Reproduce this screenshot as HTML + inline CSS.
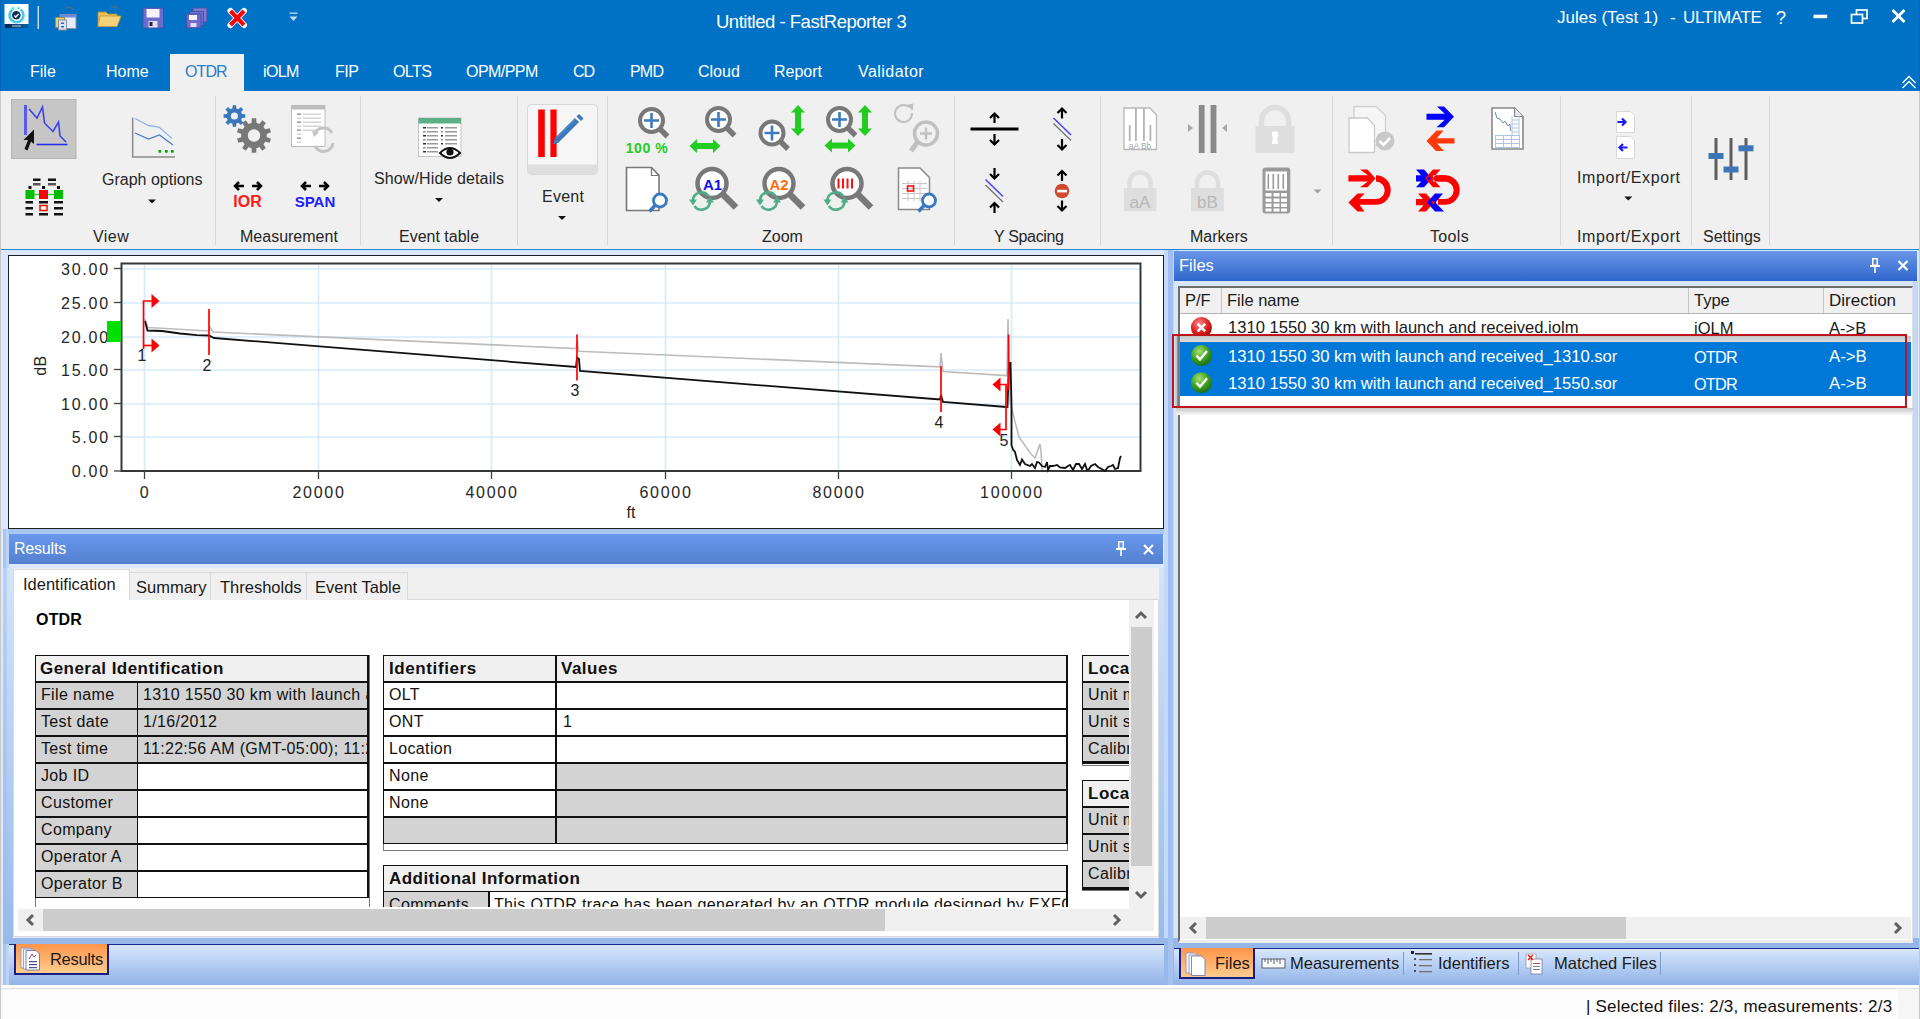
<!DOCTYPE html>
<html><head><meta charset="utf-8">
<style>
*{box-sizing:border-box;margin:0;padding:0}
html,body{width:1920px;height:1019px;overflow:hidden}
body{position:relative;background:#DCE8FB;font-family:"Liberation Sans",sans-serif;font-size:16px;color:#000}
.a{position:absolute}
.t{position:absolute;white-space:pre;line-height:1}
#title{left:0;top:0;width:1920px;height:92px;background:#0072C6}
#ribbon{left:0;top:91px;width:1920px;height:158px;background:#F0F0F0}
.sep{position:absolute;top:96px;width:1px;height:149px;background:#D5D5D5}
.glabel{position:absolute;top:228.5px;font-size:16px;color:#262626;white-space:pre;line-height:1}
.tab{position:absolute;top:64px;color:#fff;font-size:16px;white-space:pre;line-height:1}
.hdr{position:absolute;background:linear-gradient(#6898EE,#5480CE);color:#fff}
.hdr2{position:absolute;background:linear-gradient(#6A96E8,#2F66CC);color:#fff}
table{border-collapse:collapse}
</style></head><body>
<!-- window side borders -->


<!-- TITLE BAR -->
<div id="title" class="a"></div>
<div class="t" style="left:716px;top:12.5px;font-size:18.5px;color:#fff;letter-spacing:-0.49px">Untitled - FastReporter 3</div>
<div class="t" style="left:1557px;top:9px;font-size:17px;color:#fff">Jules (Test 1)</div><div class="t" style="left:1670px;top:9px;font-size:17px;color:#fff">-</div><div class="t" style="left:1683px;top:9px;font-size:17px;color:#fff;letter-spacing:-0.4px">ULTIMATE</div>

<!-- Ribbon tabs -->
<div class="a" style="left:170px;top:54px;width:74px;height:38px;background:#F0F0F0"></div>
<div class="tab" style="left:30px">File</div>
<div class="tab" style="left:106px">Home</div>
<div class="tab" style="left:185px;color:#2B7BD0;letter-spacing:-0.9px">OTDR</div>
<div class="tab" style="left:263px;letter-spacing:-0.6px">iOLM</div>
<div class="tab" style="left:335px;letter-spacing:-0.5px">FIP</div>
<div class="tab" style="left:393px;letter-spacing:-0.6px">OLTS</div>
<div class="tab" style="left:466px;letter-spacing:-0.55px">OPM/PPM</div>
<div class="tab" style="left:573px;letter-spacing:-1px">CD</div>
<div class="tab" style="left:630px;letter-spacing:-0.8px">PMD</div>
<div class="tab" style="left:698px">Cloud</div>
<div class="tab" style="left:774px">Report</div>
<div class="tab" style="left:858px;letter-spacing:0.45px">Validator</div>

<!-- RIBBON -->
<div id="ribbon" class="a"></div>
<div class="a" style="left:0;top:249px;width:1920px;height:1px;background:#2585D0"></div>
<div class="sep" style="left:215px"></div>
<div class="sep" style="left:360px"></div>
<div class="sep" style="left:517px"></div>
<div class="sep" style="left:607px"></div>
<div class="sep" style="left:954px"></div>
<div class="sep" style="left:1100px"></div>
<div class="sep" style="left:1332px"></div>
<div class="sep" style="left:1560px"></div>
<div class="sep" style="left:1691px"></div>
<div class="sep" style="left:1769px"></div>
<div class="glabel" style="left:93px;letter-spacing:0.45px">View</div>
<div class="glabel" style="left:240px">Measurement</div>
<div class="glabel" style="left:399px">Event table</div>
<div class="glabel" style="left:762px">Zoom</div>
<div class="glabel" style="left:994px;letter-spacing:-0.33px">Y Spacing</div>
<div class="glabel" style="left:1190px">Markers</div>
<div class="glabel" style="left:1430px;letter-spacing:0.35px">Tools</div>
<div class="glabel" style="left:1577px;letter-spacing:0.58px">Import/Export</div>
<div class="glabel" style="left:1703px">Settings</div>
<div class="t" style="left:102px;top:172px;color:#262626">Graph options</div>
<div class="t" style="left:374px;top:171px;color:#262626;letter-spacing:0.12px">Show/Hide details</div>
<div class="t" style="left:542px;top:189px;color:#262626;letter-spacing:0.25px">Event</div>
<div class="t" style="left:1577px;top:170px;color:#262626;letter-spacing:0.58px">Import/Export</div>

<svg class="a" style="left:0;top:0" width="1920" height="250" viewBox="0 0 1920 250">
<!-- QAT -->
<g>
<defs><linearGradient id="appstrip" x1="0" x2="1"><stop offset="0" stop-color="#021E3A"/><stop offset="0.5" stop-color="#1A4A7A"/><stop offset="1" stop-color="#0A5A9A"/></linearGradient></defs>
<rect x="4.5" y="4" width="24" height="20" fill="#fff"/>
<rect x="5" y="24" width="23" height="4" fill="url(#appstrip)"/>
<rect x="12" y="25.3" width="9" height="1.4" fill="#8AAACC"/>
<path d="M12.5 9.5 A7 7 0 1 0 20.5 9.5" fill="none" stroke="#48C8F4" stroke-width="2.6"/>
<circle cx="13" cy="8.5" r="1.4" fill="#40F0F8"/><circle cx="18.5" cy="8.3" r="1.2" fill="#40E0F8"/>
<circle cx="16.3" cy="15.2" r="4.3" fill="#14305A"/>
<path d="M14.3 15.5 l1.5 1.5 l2.8 -3" stroke="#fff" stroke-width="1.3" fill="none"/>
<rect x="37.5" y="6" width="1.5" height="23" fill="#C8D8E8"/>
<!-- windows icon -->
<rect x="60" y="14.5" width="16" height="14" fill="#E8ECFA" stroke="#8890A0"/>
<rect x="60" y="14.5" width="16" height="3" fill="#6A8AE0"/>
<rect x="55.5" y="17.5" width="9" height="10" fill="#E8D070" stroke="#A09050"/>
<rect x="58.5" y="20" width="8" height="10" fill="#DDE4F4" stroke="#8890A0"/>
<rect x="61" y="22.5" width="3" height="1.5" fill="#3A5AD0"/><rect x="61" y="26" width="3" height="1.5" fill="#3A5AD0"/>
<path d="M65 9 q4 -4 9 1" stroke="#5A6A8A" stroke-width="1.2" fill="none"/>
<!-- folder -->
<path d="M98 12 h8 l2 2 h9 v12 h-19z" fill="#E8C058" stroke="#B08A30" stroke-width="0.8"/>
<path d="M100 16 h21 l-4 10.5 h-19z" fill="#F4D27A" stroke="#C09A40" stroke-width="0.8"/>
<path d="M111 8 q4 -3 8 1" stroke="#5A6A8A" stroke-width="1.2" fill="none"/>
<!-- save -->
<rect x="143" y="8" width="20.5" height="20" fill="#6B6BD0" stroke="#4A4A9A" stroke-width="0.8"/>
<rect x="146.5" y="9" width="13" height="8.5" fill="#F4F4FA"/>
<rect x="148.5" y="21" width="9" height="6.5" fill="#E0E0F0"/>
<rect x="149.5" y="22" width="3" height="4" fill="#202040"/>
<!-- save all -->
<rect x="193" y="8" width="14" height="14" fill="#7A7AD8" stroke="#4A4A9A" stroke-width="0.8"/>
<rect x="189.5" y="11.5" width="14" height="14" fill="#7070D4" stroke="#4A4A9A" stroke-width="0.8"/>
<rect x="186.5" y="14" width="14.5" height="14" fill="#6B6BD0" stroke="#4A4A9A" stroke-width="0.8"/>
<rect x="189" y="15" width="8" height="5" fill="#F4F4FA"/>
<rect x="190.5" y="23" width="6" height="4" fill="#E0E0F0"/>
<!-- red X -->
<path d="M230.5 11 L244 25 M244 11 L230.5 25" stroke="#fff" stroke-width="6" stroke-linecap="round"/>
<path d="M230.5 11 L244 25 M244 11 L230.5 25" stroke="#FF0000" stroke-width="4"/>
<!-- qat dropdown -->
<rect x="289.5" y="12.5" width="8" height="1.3" fill="#C8D8F0"/>
<path d="M289.5 16.5 h8 l-4 4.5z" fill="#C8D8F0"/>
</g>
<!-- title buttons -->
<g fill="none" stroke="#fff">
<rect x="1813.5" y="14.7" width="13.7" height="3.5" fill="#fff" stroke="none"/>
<rect x="1856.5" y="10" width="10.5" height="8.5" stroke-width="1.7"/>
<rect x="1851.5" y="14.5" width="11" height="8.5" fill="#0072C6" stroke-width="1.7"/>
<path d="M1892.5 10 L1904.5 22 M1904.5 10 L1892.5 22" stroke-width="2.8"/>
<path d="M1902.5 83 l6.5 -6.5 l6.5 6.5 M1902.5 88 l6.5 -6.5 l6.5 6.5" stroke-width="1.4"/>
</g>
<text x="1776" y="24" font-family="Liberation Sans" font-size="18" fill="#fff">?</text>

<!-- VIEW group -->
<rect x="11.5" y="99.5" width="64.5" height="59" fill="#C6C6C6" stroke="#B4B4B4"/>
<rect x="24" y="105" width="3" height="30" fill="#5A5AF0"/>
<polyline points="29,109 37,118 42.5,107 44.5,123 53,131.5 58.5,122 60,136 66,142" fill="none" stroke="#4040F0" stroke-width="1.6"/>
<line x1="36.5" y1="144.5" x2="67.5" y2="144.5" stroke="#2828F0" stroke-width="1.6"/>
<path d="M34 129.5 L34 144 L31 141.5 L27.5 150.5 L24.5 149 L28 140 L23.5 140 Z" fill="#111"/>
<g fill="#111">
<rect x="33" y="178.5" width="7.5" height="2.5"/><rect x="48" y="178.5" width="8" height="2.5"/>
<rect x="33" y="183" width="7.5" height="2.5" fill="#555"/><rect x="48" y="183" width="8" height="2.5" fill="#555"/>
<rect x="28.5" y="186" width="3" height="3"/><rect x="42" y="186" width="3" height="3"/><rect x="57" y="186" width="3" height="3"/>
<rect x="25.5" y="201" width="7.5" height="2.5"/><rect x="39" y="201" width="9" height="2.5"/><rect x="54" y="201" width="9" height="2.5"/>
<rect x="25.5" y="207" width="7.5" height="2.5"/><rect x="54" y="207" width="9" height="2.5"/>
<rect x="25.5" y="213" width="7.5" height="2.5"/><rect x="39" y="213" width="9" height="2.5"/><rect x="54" y="213" width="9" height="2.5"/>
</g>
<line x1="30" y1="194.5" x2="58" y2="194.5" stroke="#22CC22" stroke-width="1.2"/>
<rect x="25.5" y="190" width="9" height="9" fill="#00BB00"/>
<rect x="39" y="190" width="9" height="9" fill="#FF0000"/>
<rect x="54" y="190" width="9" height="9" fill="#00BB00"/>
<rect x="40" y="205.5" width="7" height="5" fill="#fff" stroke="#FF0000" stroke-width="1.5"/>
<!-- graph options -->
<polyline points="132.7,117.5 132.7,157 175,157" fill="none" stroke="#8A8A8A" stroke-width="1.5"/>
<polyline points="135,118.5 148.5,125.5 159,127 172,138.5" fill="none" stroke="#90B4EA" stroke-width="1.3"/>
<polyline points="135,133 148.5,139 159.5,135 173,145" fill="none" stroke="#4A78C0" stroke-width="1.3"/>
<rect x="158.5" y="150" width="2.7" height="2.7" fill="#00AA00"/><rect x="165" y="150" width="2.7" height="2.7" fill="#00AA00"/><rect x="171" y="150" width="2.7" height="2.7" fill="#00AA00"/>
<path d="M148 199.5 h8 l-4 4z" fill="#111"/>

<!-- MEASUREMENT group -->
<path d="M231.42 108.79 L232.52 108.43 L232.68 105.14 L236.12 105.14 L236.28 108.43 L237.38 108.79 L238.42 109.32 L240.87 107.10 L243.30 109.53 L241.08 111.98 L241.61 113.02 L241.97 114.12 L245.26 114.28 L245.26 117.72 L241.97 117.88 L241.61 118.98 L241.08 120.02 L243.30 122.47 L240.87 124.90 L238.42 122.68 L237.38 123.21 L236.28 123.57 L236.12 126.86 L232.68 126.86 L232.52 123.57 L231.42 123.21 L230.38 122.68 L227.93 124.90 L225.50 122.47 L227.72 120.02 L227.19 118.98 L226.83 117.88 L223.54 117.72 L223.54 114.28 L226.83 114.12 L227.19 113.02 L227.72 111.98 L225.50 109.53 L227.93 107.10 L230.38 109.32Z M238.00 116.00 A3.6 3.6 0 1 0 230.80 116.00 A3.6 3.6 0 1 0 238.00 116.00Z" fill="#3A78BE" fill-rule="evenodd"/>
<path d="M250.04 123.33 L251.52 122.94 L251.83 118.34 L256.17 118.34 L256.48 122.94 L257.96 123.33 L259.38 123.88 L262.33 120.34 L265.84 122.89 L263.39 126.80 L264.36 127.98 L265.18 129.26 L269.65 128.13 L270.99 132.26 L266.71 133.98 L266.80 135.50 L266.71 137.02 L270.99 138.74 L269.65 142.87 L265.18 141.74 L264.36 143.02 L263.39 144.20 L265.84 148.11 L262.33 150.66 L259.38 147.12 L257.96 147.67 L256.48 148.06 L256.17 152.66 L251.83 152.66 L251.52 148.06 L250.04 147.67 L248.62 147.12 L245.67 150.66 L242.16 148.11 L244.61 144.20 L243.64 143.02 L242.82 141.74 L238.35 142.87 L237.01 138.74 L241.29 137.02 L241.20 135.50 L241.29 133.98 L237.01 132.26 L238.35 128.13 L242.82 129.26 L243.64 127.98 L244.61 126.80 L242.16 122.89 L245.67 120.34 L248.62 123.88Z M260.20 135.50 A6.2 6.2 0 1 0 247.80 135.50 A6.2 6.2 0 1 0 260.20 135.50Z" fill="#787878" fill-rule="evenodd"/>
<rect x="291.5" y="105.5" width="33.5" height="41" fill="#fff" stroke="#BDBDBD"/>
<rect x="291.5" y="105.5" width="33.5" height="4" fill="#BDBDBD"/>
<g fill="#D4D4D4"><rect x="297" y="113.5" width="4" height="1.5" fill="#999"/><rect x="303" y="113.5" width="18" height="1.5"/>
<rect x="297" y="117.5" width="4" height="1.5"/><rect x="303" y="117.5" width="18" height="1.5"/>
<rect x="297" y="121.5" width="4" height="1.5" fill="#999"/><rect x="303" y="121.5" width="18" height="1.5"/>
<rect x="297" y="125.5" width="4" height="1.5"/><rect x="303" y="125.5" width="18" height="1.5"/>
<rect x="297" y="129.5" width="4" height="1.5" fill="#999"/><rect x="303" y="129.5" width="14" height="1.5"/>
<rect x="297" y="133.5" width="4" height="1.5"/><rect x="297" y="137.5" width="4" height="1.5" fill="#999"/><rect x="297" y="141.5" width="4" height="1.5"/></g>
<path d="M314.5 135 a9.5 9.5 0 0 1 17.5 -2 M333 143 a9.5 9.5 0 0 1 -18 3" fill="none" stroke="#C4C4C4" stroke-width="3"/>
<path d="M312 131 l7 1 l-5 5z" fill="#C4C4C4"/>
<g stroke="#000" stroke-width="2.5" fill="none">
<path d="M235 186 h9 M239 182 l-4 4 l4 4 M252 186 h9 M257 182 l4 4 l-4 4"/>
<path d="M302 186 h9 M306 182 l-4 4 l4 4 M319 186 h9 M324 182 l4 4 l-4 4"/>
</g>
<text x="247.5" y="207" font-family="Liberation Sans" font-weight="700" font-size="16" fill="#FF1A1A" text-anchor="middle">IOR</text>
<text x="315" y="207" font-family="Liberation Sans" font-weight="700" font-size="15" fill="#2020FF" text-anchor="middle">SPAN</text>

<!-- EVENT TABLE group -->
<rect x="418.5" y="118" width="42.5" height="38.5" fill="#fff" stroke="#C4C4C4"/>
<rect x="418.5" y="118" width="42.5" height="5.5" fill="#5DAF85"/>
<g fill="#9A9A9A">
<rect x="423" y="127" width="3" height="1.5" fill="#333"/><rect x="427" y="127" width="11" height="1.5"/><rect x="441" y="127" width="2" height="1.5" fill="#333"/><rect x="445" y="127" width="12" height="1.5"/>
<rect x="423" y="131" width="3" height="1.5"/><rect x="427" y="131" width="11" height="1.5"/><rect x="441" y="131" width="2" height="1.5"/><rect x="445" y="131" width="12" height="1.5"/>
<rect x="423" y="135" width="3" height="1.5" fill="#333"/><rect x="427" y="135" width="11" height="1.5"/><rect x="441" y="135" width="2" height="1.5" fill="#333"/><rect x="445" y="135" width="12" height="1.5"/>
<rect x="423" y="139" width="3" height="1.5"/><rect x="427" y="139" width="11" height="1.5"/><rect x="441" y="139" width="2" height="1.5"/><rect x="445" y="139" width="12" height="1.5"/>
<rect x="423" y="143" width="3" height="1.5" fill="#333"/><rect x="427" y="143" width="11" height="1.5"/><rect x="441" y="143" width="2" height="1.5" fill="#333"/><rect x="445" y="143" width="12" height="1.5"/>
<rect x="423" y="147" width="3" height="1.5"/><rect x="427" y="147" width="11" height="1.5"/>
<rect x="423" y="151" width="3" height="1.5" fill="#333"/><rect x="427" y="151" width="11" height="1.5"/>
</g>
<path d="M440 153 q10 -10 20 0 q-10 10 -20 0z" fill="#fff" stroke="#111" stroke-width="2"/>
<circle cx="450" cy="152" r="3.6" fill="#111"/>
<path d="M435 198 h8 l-4 4z" fill="#111"/>
<!-- EVENT group -->
<rect x="527.5" y="104.5" width="70" height="70" rx="4" fill="#F6F6F6" stroke="#D6D6D6"/>
<path d="M528 164.5 h69 v6 a4 4 0 0 1 -4 4 h-61 a4 4 0 0 1 -4 -4z" fill="#DEDEDE"/>
<rect x="538.2" y="109.5" width="6.6" height="47.5" fill="#FF0000"/>
<rect x="550.4" y="109.5" width="6.2" height="47.5" fill="#FF0000"/>
<path d="M556.5 140.5 L577 120" stroke="#3C78BE" stroke-width="6"/>
<path d="M553 144.5 l1.8 -6 l4.2 4.2z" fill="#3C78BE"/>
<path d="M576.5 116.5 l2.5 -2.5 l4.5 4.5 l-2.5 2.5z" fill="#3C78BE"/>
<path d="M557.5 137 L575.5 119" stroke="#6A9AD0" stroke-width="1"/>
<path d="M558 216 h8 l-4 4z" fill="#111"/>

<!-- ZOOM group -->
<defs>
<g id="mag"><circle cx="0" cy="0" r="11.5" fill="#fff" stroke="#787878" stroke-width="4"/><path d="M8.5 8.5 L16 16" stroke="#787878" stroke-width="5.5"/></g>
<g id="plus"><path d="M-7.5 0 h15 M0 -7.5 v15" stroke="#3D7AC0" stroke-width="2.6"/></g>
<g id="bigmag"><circle cx="0" cy="0" r="14.5" fill="#fff" stroke="#787878" stroke-width="4.5"/><path d="M11 11 L24 24" stroke="#787878" stroke-width="6.5"/></g>
<g id="refresh"><g fill="none" stroke="#4EAE88" stroke-width="2.6"><path d="M-8.5 0 A8.5 8.5 0 0 1 7 -5"/><path d="M8.5 0 A8.5 8.5 0 0 1 -7 5"/></g><path d="M-12.5 -1.5 L-4.5 -1.5 L-8.5 4.5z M12.5 1.5 L4.5 1.5 L8.5 -4.5z" fill="#4EAE88"/></g>
<g id="hdarrow" fill="#22CC22"><path d="M-15.5 0 l7.5 -7 v4 h16 v-4 l7.5 7 l-7.5 7 v-4 h-16 v4z"/></g>
<g id="vdarrow" fill="#22CC22"><path d="M0 -15.5 l-7 7.5 h4 v16 h-4 l7 7.5 l7 -7.5 h-4 v-16 h4z"/></g>
</defs>
<use href="#mag" x="651.5" y="120.5"/><use href="#plus" x="651.5" y="120.5"/>
<text x="647" y="152.5" font-family="Liberation Sans" font-weight="700" font-size="14" fill="#22CC22" text-anchor="middle" letter-spacing="0.6">100 %</text>
<use href="#mag" x="718.5" y="119.5"/><use href="#plus" x="718.5" y="119.5"/>
<use href="#hdarrow" x="705" y="146"/>
<use href="#mag" x="772" y="133"/><use href="#plus" x="772" y="133"/>
<use href="#vdarrow" x="798" y="120.5"/>
<use href="#mag" x="839.5" y="119.5"/><use href="#plus" x="839.5" y="119.5"/>
<use href="#vdarrow" x="865" y="120.5"/>
<use href="#hdarrow" x="840" y="145.5"/>
<g opacity="0.55">
<circle cx="926" cy="133.5" r="11.5" fill="none" stroke="#9A9A9A" stroke-width="3.5"/>
<path d="M917.5 142 L911 151" stroke="#9A9A9A" stroke-width="5"/>
<path d="M920 133.5 h12 M926 127.5 v12" stroke="#9A9A9A" stroke-width="2.4"/>
<path d="M909 107 a8.5 8.5 0 1 0 3 6" fill="none" stroke="#9A9A9A" stroke-width="2"/>
<path d="M906.5 105 l7 -1.5 l-1 7z" fill="#9A9A9A"/>
</g>
<!-- row 2 -->
<path d="M626.5 167.5 h25 l7.5 8 v35 h-32.5z" fill="#fff" stroke="#787878" stroke-width="1.6"/>
<path d="M651.5 167.5 v8 h7.5" fill="none" stroke="#787878" stroke-width="1.2"/>
<circle cx="660" cy="200.5" r="6.5" fill="#fff" stroke="#3C78C0" stroke-width="2.8"/>
<path d="M655 205.5 L649.5 211.5" stroke="#3C78C0" stroke-width="3.5"/>
<use href="#bigmag" x="712" y="183.5"/>
<text x="712.5" y="190" font-family="Liberation Sans" font-weight="700" font-size="15" fill="#1010EE" text-anchor="middle">A1</text>
<use href="#refresh" x="701.5" y="201"/>
<use href="#bigmag" x="779" y="183.5"/>
<text x="779" y="190" font-family="Liberation Sans" font-weight="700" font-size="15" fill="#FF6A10" text-anchor="middle">A2</text>
<use href="#refresh" x="768.5" y="201"/>
<use href="#bigmag" x="847" y="183.5"/>
<g fill="#FF1010"><rect x="837.5" y="178.5" width="2" height="10"/><rect x="842" y="178.5" width="2" height="10"/><rect x="846.5" y="178.5" width="2" height="10"/><rect x="851" y="178.5" width="2" height="10"/></g>
<use href="#refresh" x="836" y="201"/>
<path d="M898.5 168 h21.5 l9.5 9.5 v32 h-31z" fill="#fff" stroke="#8A8A8A" stroke-width="1.5"/>
<g stroke="#C8C8C8" stroke-width="1" fill="none"><path d="M902 183.5 h25 M902 188.5 h25 M902 193.5 h25 M902 198.5 h20 M908 181 v20 M914 181 v20 M920 181 v20"/></g>
<rect x="907.5" y="186" width="6" height="5" fill="none" stroke="#FF1010" stroke-width="1.6"/>
<circle cx="929" cy="200.5" r="6.5" fill="#fff" stroke="#3C78C0" stroke-width="2.8"/>
<path d="M924 205.5 L918.5 211.5" stroke="#3C78C0" stroke-width="3.5"/>

<!-- Y SPACING -->
<g stroke="#000" fill="none" stroke-width="2.2">
<path d="M970.5 129 h48" stroke-width="3"/>
<path d="M994.5 113 v10 M990 118 l4.5 -4.5 l4.5 4.5"/>
<path d="M994.5 134 v10 M990 140 l4.5 4.5 l4.5 -4.5"/>
<path d="M1062 108.5 v10 M1057.5 113 l4.5 -4.5 l4.5 4.5"/>
<path d="M1062 139 v10 M1057.5 145 l4.5 4.5 l4.5 -4.5"/>
<path d="M994.5 168 v10 M990 174 l4.5 4.5 l4.5 -4.5"/>
<path d="M994.5 203 v10 M990 207.5 l4.5 -4.5 l4.5 4.5"/>
<path d="M1062 171 v10 M1057.5 175.5 l4.5 -4.5 l4.5 4.5"/>
<path d="M1062 200.5 v10 M1057.5 206 l4.5 4.5 l4.5 -4.5"/>
</g>
<path d="M1053.5 118 L1071 135" stroke="#4848F0" stroke-width="1.6"/>
<path d="M1053.5 123.5 L1071 140.5" stroke="#707070" stroke-width="1.2"/>
<path d="M985.5 179.5 L1003 196.5" stroke="#4848F0" stroke-width="1.6"/>
<path d="M985.5 185 L1003 202" stroke="#707070" stroke-width="1.2"/>
<circle cx="1062" cy="191" r="7.3" fill="#D04A2E"/>
<rect x="1057" y="189.8" width="10" height="2.6" fill="#fff"/>

<!-- MARKERS -->
<path d="M1124 108 h26 l6.5 7 v34.5 h-32.5z" fill="#fff" stroke="#B8B8B8" stroke-width="1.3"/>
<g fill="#B4B4B4"><rect x="1128.8" y="125" width="1.8" height="16"/><rect x="1135" y="108" width="1.8" height="33"/><rect x="1143" y="108" width="1.8" height="33"/><rect x="1149.5" y="125" width="1.8" height="16"/></g>
<text x="1140" y="148.5" font-family="Liberation Sans" font-size="8.5" fill="#A8A8A8" text-anchor="middle">aA Bb</text>
<rect x="1198.8" y="105" width="5.8" height="48" fill="#8A8A8A"/><rect x="1210.6" y="105" width="5.8" height="48" fill="#8A8A8A"/>
<path d="M1188 124 l5 4 l-5 4z M1227 124 l-5 4 l5 4z" fill="#A8A8A8"/>
<path d="M1261.5 127 v-6 a13.5 13.5 0 0 1 27 0 v6" fill="none" stroke="#DEDEDE" stroke-width="5.5"/>
<rect x="1255.5" y="126" width="39" height="27" fill="#DEDEDE"/>
<circle cx="1275" cy="134.5" r="3.2" fill="#fff"/><path d="M1273 136 h4 l1 8 h-6z" fill="#fff"/>
<path d="M1129.5 188.5 v-5.5 a10.5 10.5 0 0 1 21 0 v5.5" fill="none" stroke="#DEDEDE" stroke-width="4.5"/>
<rect x="1123.8" y="188" width="32.5" height="23" fill="#DEDEDE"/>
<text x="1140" y="207.5" font-family="Liberation Sans" font-size="17" fill="#B8B8B8" text-anchor="middle">aA</text>
<path d="M1197 188.5 v-5.5 a10.5 10.5 0 0 1 21 0 v5.5" fill="none" stroke="#DEDEDE" stroke-width="4.5"/>
<rect x="1191" y="188" width="32.8" height="23" fill="#DEDEDE"/>
<text x="1207.5" y="207.5" font-family="Liberation Sans" font-size="17" fill="#B8B8B8" text-anchor="middle">bB</text>
<rect x="1262.5" y="167.5" width="27.8" height="46" rx="3" fill="#9A9A9A"/>
<rect x="1265.5" y="171.5" width="21.5" height="19" fill="#fff"/>
<g fill="#9A9A9A"><rect x="1267.5" y="174" width="1.6" height="15"/><rect x="1272.5" y="174" width="1.6" height="15"/><rect x="1277.5" y="174" width="1.6" height="15"/><rect x="1282.5" y="174" width="1.6" height="15"/></g>
<g fill="#fff"><rect x="1265.5" y="193" width="6" height="3.5"/><rect x="1273.5" y="193" width="6" height="3.5"/><rect x="1281" y="193" width="6" height="3.5"/>
<rect x="1265.5" y="198.5" width="6" height="3.5"/><rect x="1273.5" y="198.5" width="6" height="3.5"/><rect x="1281" y="198.5" width="6" height="3.5"/>
<rect x="1265.5" y="203.5" width="6" height="3.5"/><rect x="1273.5" y="203.5" width="6" height="3.5"/><rect x="1281" y="203.5" width="6" height="3.5"/>
<rect x="1265.5" y="208.5" width="6" height="3" /><rect x="1273.5" y="208.5" width="6" height="3"/><rect x="1281" y="208.5" width="6" height="3"/></g>
<path d="M1313.5 189.5 h8 l-4 4z" fill="#A0A0A0"/>

<!-- TOOLS -->
<path d="M1354 106.5 h22 l9.5 9 v30 h-31.5z" fill="#F6F6F6" stroke="#D0D0D0" stroke-width="1.3"/>
<path d="M1349 118 h18.5 l7 7.5 v27 h-25.5z" fill="#fff" stroke="#CACACA" stroke-width="1.3"/>
<circle cx="1385" cy="141" r="9.5" fill="#C8C8C8"/>
<path d="M1379.5 141 l4 4 l6.5 -7" fill="none" stroke="#fff" stroke-width="2.6"/>
<path d="M1426.5 113.8 H1444.8 L1437 106.5 H1444 L1454 116.8 L1444 127.2 H1436.5 L1444.8 119.7 H1426.5z" fill="#0000FF"/>
<path d="M1454.5 138.2 H1436.8 L1443.5 130.5 H1436.5 L1426.5 141 L1436 151 H1444 L1437 143.6 H1454.5z" fill="#FF3A0A"/>
<path d="M1492 108 h22.5 l8.5 8.5 v32.5 h-31z" fill="#fff" stroke="#888" stroke-width="1.6"/>
<path d="M1514.5 108 v8.5 h8.5" fill="#E8E8E8" stroke="#888" stroke-width="1.2"/>
<polyline points="1495,112 1497,118 1500,119 1503,123 1505,121 1508,126 1510,124 1510.5,131" fill="none" stroke="#6A8AC0" stroke-width="1"/>
<g stroke="#A8BEE0" stroke-width="0.9" fill="none"><rect x="1495.5" y="135.5" width="24" height="12"/><path d="M1495.5 139.5 h24 M1495.5 143.5 h24 M1503.5 135.5 v12 M1511.5 135.5 v12 M1512 120 h7 M1512 124 h7 M1512 128 h7 M1512 132 h7 M1512 116 v20 M1519 116 v20"/></g>
<g fill="#FF0000">
<path d="M1348.4 175.3 H1368 L1360 169.4 H1367.5 L1375.5 178.5 L1367.5 187.3 H1360 L1368 181.6 H1348.4z"/>
<path d="M1376 175.3 A14.7 14.7 0 0 1 1376 204.7 H1359.5 L1364.5 211.4 H1357.5 L1348.4 202.5 L1357.5 193.6 H1364.5 L1359.5 199 H1376 A8.7 8.7 0 0 0 1376 181.6z"/>
</g>
<path d="M1445 175.3 A14.7 14.7 0 0 1 1445 204.7 H1438 V199 H1445 A8.7 8.7 0 0 0 1445 181.6 H1438 V175.3z" fill="#FF0000"/>
<path d="M1416 175.3 H1428 V181.6 H1416z M1416 169.4 H1424 L1432 178.5 L1424 187.3 H1416 L1424 178.5z" fill="#0000FF"/>
<path d="M1440.5 169.4 H1433 L1425 178.5 L1433 187.3 H1440.5 L1432.5 178.5z M1433 175.3 H1446 V181.6 H1433z" fill="#FF0000"/>
<circle cx="1429" cy="178.5" r="2" fill="#0000FF" stroke="#FF0000" stroke-width="0.8"/>
<path d="M1416 199 H1428 V205.3 H1416z M1418 193.6 H1426 L1434 202.5 L1426 211.4 H1418 L1426 202.5z" fill="#FF0000"/>
<path d="M1443 193.6 H1435 L1427 202.5 L1435 211.4 H1444 L1435.5 202.5z" fill="#0000FF"/>
<circle cx="1433" cy="202.5" r="2" fill="#FF0000" stroke="#0000FF" stroke-width="0.8"/>

<!-- IMPORT/EXPORT -->
<path d="M1616.5 111.5 h14 l4 4 v17 h-18z" fill="#fff" stroke="#D8D8D8"/>
<path d="M1616.5 136.5 h14 l4 4 v18 h-18z" fill="#fff" stroke="#D8D8D8"/>
<path d="M1617.5 122 h7 M1622 118.5 l3.5 3.5 l-3.5 3.5" fill="none" stroke="#1A1AFF" stroke-width="2.2"/>
<path d="M1627.5 147.5 h-7.5 M1623 144 l-3.5 3.5 l3.5 3.5" fill="none" stroke="#1A1AFF" stroke-width="2.2"/>
<path d="M1624.3 196.5 h8 l-4 4z" fill="#111"/>
<!-- SETTINGS -->
<g fill="#5E5E5E"><rect x="1714.5" y="138" width="3" height="42"/><rect x="1729.5" y="138" width="3" height="42"/><rect x="1744.5" y="138" width="3" height="42"/></g>
<g fill="#3C76B4"><rect x="1708.5" y="153" width="15" height="6"/><rect x="1723.5" y="166.5" width="15" height="6"/><rect x="1738.5" y="145.3" width="15" height="6"/></g>
</svg>


<!-- CHART PANEL -->
<div class="a" style="left:8px;top:255px;width:1156px;height:274px;border:1px solid #1E1E1E;background:#fff"></div>

<svg class="a" style="left:0;top:0" width="1170" height="535" viewBox="0 0 1170 535">
<g fill="none" stroke="#D6EAFB" stroke-width="1.5">
<line x1="123" y1="269" x2="1140" y2="269"/>
<line x1="123" y1="303" x2="1140" y2="303"/>
<line x1="123" y1="337" x2="1140" y2="337"/>
<line x1="123" y1="370" x2="1140" y2="370"/>
<line x1="123" y1="404" x2="1140" y2="404"/>
<line x1="123" y1="437" x2="1140" y2="437"/>
<line x1="144.5" y1="264" x2="144.5" y2="471" stroke-width="1.7"/>
<line x1="318.5" y1="264" x2="318.5" y2="471" stroke-width="1.7"/>
<line x1="491.5" y1="264" x2="491.5" y2="471" stroke-width="1.7"/>
<line x1="665.5" y1="264" x2="665.5" y2="471" stroke-width="1.7"/>
<line x1="838.5" y1="264" x2="838.5" y2="471" stroke-width="1.7"/>
<line x1="1011.5" y1="264" x2="1011.5" y2="471" stroke-width="1.7"/>
</g>
<rect x="121.5" y="263.5" width="1019" height="207.5" fill="none" stroke="#383838" stroke-width="2"/>
<g stroke="#404040" stroke-width="1.3">
<line x1="114" y1="268.5" x2="121" y2="268.5"/>
<line x1="114" y1="302.5" x2="121" y2="302.5"/>
<line x1="114" y1="336.5" x2="121" y2="336.5"/>
<line x1="114" y1="369.5" x2="121" y2="369.5"/>
<line x1="114" y1="403.5" x2="121" y2="403.5"/>
<line x1="114" y1="436.5" x2="121" y2="436.5"/>
<line x1="114" y1="471" x2="121" y2="471"/>
<line x1="144.5" y1="471" x2="144.5" y2="479"/>
<line x1="318.5" y1="471" x2="318.5" y2="479"/>
<line x1="491.5" y1="471" x2="491.5" y2="479"/>
<line x1="665.5" y1="471" x2="665.5" y2="479"/>
<line x1="838.5" y1="471" x2="838.5" y2="479"/>
<line x1="1011.5" y1="471" x2="1011.5" y2="479"/>
</g>
<g font-family="Liberation Sans" font-size="16" fill="#262626" letter-spacing="1.75">
<text x="109.8" y="274.5" text-anchor="end">30.00</text>
<text x="109.8" y="308.5" text-anchor="end">25.00</text>
<text x="109.8" y="342.5" text-anchor="end">20.00</text>
<text x="109.8" y="375.5" text-anchor="end">15.00</text>
<text x="109.8" y="409.5" text-anchor="end">10.00</text>
<text x="109.8" y="442.5" text-anchor="end">5.00</text>
<text x="109.8" y="477" text-anchor="end">0.00</text>
<text x="145.0" y="498" text-anchor="middle">0</text>
<text x="319.0" y="498" text-anchor="middle">20000</text>
<text x="492.0" y="498" text-anchor="middle">40000</text>
<text x="666.0" y="498" text-anchor="middle">60000</text>
<text x="839.0" y="498" text-anchor="middle">80000</text>
<text x="1012.0" y="498" text-anchor="middle">100000</text>
<text x="631" y="518" text-anchor="middle" letter-spacing="0">ft</text>
<text transform="translate(46,365.5) rotate(-90)" text-anchor="middle" letter-spacing="0.5">dB</text>
</g>
<rect x="107" y="321" width="14" height="21" fill="#00E000"/>
<polyline points="145,319 148,327.5 209,331 210,327 213,332 576,348.6 577.5,341 578.5,351 579,351.25 940,366.8 941,353 943,371.6 1007,375.6 1008,319 1010,402 1019,437 1031,454 1035,458 1040,444 1041,451 1042,470" fill="none" stroke="#BCBCBC" stroke-width="1.6"/>
<polyline points="145,321 147.5,330.5 162,331 180,333.5 197,335.2 209,335.5 214,338 576,367 577,357.5 579,359 580,371 940,399.5 941,395 943,402 1006.5,407 1007.5,407 1009,363 1010.5,363 1011.5,404 1011.5,445.2 1013,449.5 1015,452 1017,460 1020,465 1022,459.5 1025,464 1030,466 1032,464 1035,468 1037,462 1039,462.5 1042,466 1045,467 1047,462 1048,470 1050,466 1053,466 1057,465 1060,467.5 1065,468 1068,466 1070,465 1073,470 1076,464 1079,464 1082,469 1085,464 1087,470 1089,469 1091,466 1095,464 1098,467 1100,468 1105,471 1108,467 1111,466 1113,465 1115,469 1118,468 1120,458 1121,456" fill="none" stroke="#101010" stroke-width="1.8" stroke-linejoin="miter"/>
<g stroke="#FF0000" stroke-width="1.7" fill="none">
<polyline points="152,301 143.5,301 143.5,349"/><line x1="143.5" y1="345.5" x2="152" y2="345.5"/>
<line x1="209" y1="309" x2="209" y2="355"/>
<line x1="577" y1="334.5" x2="577" y2="380.5"/>
<line x1="941" y1="366" x2="941" y2="412"/>
<line x1="1008.5" y1="334.5" x2="1008.5" y2="390"/>
<polyline points="1000,384.5 1006,384.5 1006,429.5 1000,429.5"/>
</g>
<g fill="#FF0000">
<polygon points="151.5,294 159.5,301 151.5,308"/><polygon points="151.5,338.5 159.5,345.5 151.5,352.5"/>
<polygon points="1000.5,377.5 992.5,384.5 1000.5,391.5"/><polygon points="1000.5,422.5 992.5,429.5 1000.5,436.5"/>
</g>
<g font-family="Liberation Sans" font-size="16" fill="#222" text-anchor="middle">
<text x="142" y="361">1</text>
<text x="207" y="371">2</text>
<text x="575" y="396">3</text>
<text x="939" y="428">4</text>
<text x="1004" y="446">5</text>
</g>
</svg>

<div class="a" style="left:3px;top:529px;width:6px;height:456px;background:linear-gradient(90deg,#A8C6F0 0,#A8C6F0 3px,#BED4F5 3px)"></div>
<div class="a" style="left:3px;top:568px;width:4px;height:376px;background:linear-gradient(#BAD2F5,#98BAEA)"></div>
<div class="a" style="left:7px;top:568px;width:6px;height:376px;background:linear-gradient(#D4E4FA,#98BAEA)"></div>
<div class="a" style="left:1159px;top:568px;width:5px;height:376px;background:linear-gradient(#D2E4FA,#98BAEA)"></div>
<div class="a" style="left:8px;top:529px;width:1156px;height:5px;background:#A8C6F2"></div>
<div class="a" style="left:1164px;top:250px;width:14px;height:735px;background:linear-gradient(90deg,#C4D9F6 0,#C4D9F6 4px,#A0BEF2 4px,#A0BEF2 9px,#C4D9F6 9px)"></div>
<!-- RESULTS PANEL -->
<div class="hdr" style="left:9px;top:534px;width:1154px;height:30px"></div>
<div class="t" style="left:14px;top:541px;color:#fff;font-size:16px;letter-spacing:-0.2px">Results</div>
<svg class="a" style="left:1108px;top:538px" width="52" height="22" viewBox="0 0 52 22">
<g fill="#fff"><rect x="10" y="3" width="6" height="7"/><rect x="8" y="10" width="10" height="2"/><rect x="12.2" y="12" width="1.6" height="6"/></g>
<rect x="11.5" y="4.5" width="3" height="5" fill="#6A94E6"/>
<path d="M36 7 l9 9 M45 7 l-9 9" stroke="#fff" stroke-width="2.2"/>
</svg>
<!-- tab strip -->
<div class="a" style="left:13px;top:568px;width:1146px;height:32px;background:#F0F0F0;border-bottom:1px solid #DADADA"></div>
<div class="a" style="left:129px;top:572px;width:82px;height:28px;background:#F0F0F0;border:1px solid #DADADA;border-bottom:none"></div>
<div class="a" style="left:210px;top:572px;width:97px;height:28px;background:#F0F0F0;border:1px solid #DADADA;border-bottom:none"></div>
<div class="a" style="left:306px;top:572px;width:102px;height:28px;background:#F0F0F0;border:1px solid #DADADA;border-bottom:none"></div>
<div class="a" style="left:13px;top:569px;width:117px;height:32px;background:#fff;border:1px solid #DADADA;border-bottom:none"></div>
<div class="t" style="left:23px;top:576px;font-size:16.5px;color:#1A1A1A">Identification</div>
<div class="t" style="left:136px;top:579px;font-size:16.5px;color:#1A1A1A">Summary</div>
<div class="t" style="left:220px;top:579px;font-size:16.5px;color:#1A1A1A">Thresholds</div>
<div class="t" style="left:315px;top:579px;font-size:16.5px;color:#1A1A1A">Event Table</div>
<!-- content -->
<div class="a" style="left:13px;top:600px;width:1146px;height:337px;background:#fff;border:1px solid #DADADA;border-top:none"></div>
<div class="a" style="left:14px;top:600px;width:1115px;height:307px;overflow:hidden">
 <div class="t" style="left:22px;top:12px;font-size:16px;font-weight:700;letter-spacing:0.2px">OTDR</div>
 <div style="position:absolute;left:0;top:0;font-size:16px;letter-spacing:0.35px;color:#111">
 <!-- Table 1 -->
 <div class="a" style="left:21px;top:55px;width:335px;height:260px;border:1px solid #777"></div>
 <div class="a" style="left:22px;top:56px;width:332px;height:25px;background:#F0F0F0"></div>
 <div class="a" style="left:22px;top:82px;width:101px;height:215px;background:#D3D3D3"></div>
 <div class="a" style="left:123px;top:82px;width:231px;height:80px;background:#D3D3D3"></div>
 <div class="a" style="left:21px;top:55px;width:334px;height:243px;border:1.5px solid #111;border-right:2px solid #111"></div>
 <div class="a" style="left:21px;top:81px;width:334px;height:1.5px;background:#111"></div>
 <div class="a" style="left:21px;top:108px;width:334px;height:1.5px;background:#111"></div>
 <div class="a" style="left:21px;top:135px;width:334px;height:1.5px;background:#111"></div>
 <div class="a" style="left:21px;top:162px;width:334px;height:1.5px;background:#111"></div>
 <div class="a" style="left:21px;top:189px;width:334px;height:1.5px;background:#111"></div>
 <div class="a" style="left:21px;top:216px;width:334px;height:1.5px;background:#111"></div>
 <div class="a" style="left:21px;top:243px;width:334px;height:1.5px;background:#111"></div>
 <div class="a" style="left:21px;top:270px;width:334px;height:1.5px;background:#111"></div>
 <div class="a" style="left:122.5px;top:81px;width:1.5px;height:216px;background:#111"></div>
 <div class="t" style="left:26px;top:60px;font-weight:700;font-size:17px;letter-spacing:0.45px">General Identification</div>
 <div class="t" style="left:27px;top:87px">File name</div>
 <div class="t" style="left:27px;top:114px">Test date</div>
 <div class="t" style="left:27px;top:141px">Test time</div>
 <div class="t" style="left:27px;top:168px">Job ID</div>
 <div class="t" style="left:27px;top:195px">Customer</div>
 <div class="t" style="left:27px;top:222px">Company</div>
 <div class="t" style="left:27px;top:249px">Operator A</div>
 <div class="t" style="left:27px;top:276px">Operator B</div>
 <div class="a" style="left:124px;top:82px;width:230px;height:53px;overflow:hidden">
  <div class="t" style="left:5px;top:5px">1310 1550 30 km with launch and received_1310.sor</div>
  <div class="t" style="left:5px;top:32px">1/16/2012</div>
 </div>
 <div class="a" style="left:124px;top:136px;width:230px;height:26px;overflow:hidden">
  <div class="t" style="left:5px;top:5px;letter-spacing:0.3px">11:22:56 AM (GMT-05:00); 11:22:56 AM</div>
 </div>
 <!-- Table 2 -->
 <div class="a" style="left:369px;top:55px;width:685px;height:196px;border:1px solid #777"></div>
 <div class="a" style="left:370px;top:56px;width:683px;height:25px;background:#F0F0F0"></div>
 <div class="a" style="left:542px;top:163px;width:511px;height:80px;background:#D3D3D3"></div>
 <div class="a" style="left:370px;top:217px;width:172px;height:26px;background:#D3D3D3"></div>
 <div class="a" style="left:369px;top:55px;width:685px;height:189px;border:1.5px solid #111;border-right:2px solid #111"></div>
 <div class="a" style="left:369px;top:81px;width:685px;height:1.5px;background:#111"></div>
 <div class="a" style="left:369px;top:108px;width:685px;height:1.5px;background:#111"></div>
 <div class="a" style="left:369px;top:135px;width:685px;height:1.5px;background:#111"></div>
 <div class="a" style="left:369px;top:162px;width:685px;height:1.5px;background:#111"></div>
 <div class="a" style="left:369px;top:189px;width:685px;height:1.5px;background:#111"></div>
 <div class="a" style="left:369px;top:216px;width:685px;height:1.5px;background:#111"></div>
 <div class="a" style="left:541px;top:55px;width:1.5px;height:188px;background:#111"></div>
 <div class="t" style="left:375px;top:60px;font-weight:700;font-size:17px;letter-spacing:0.6px">Identifiers</div>
 <div class="t" style="left:547px;top:60px;font-weight:700;font-size:17px;letter-spacing:0.5px">Values</div>
 <div class="t" style="left:375px;top:87px">OLT</div>
 <div class="t" style="left:549px;top:114px">1</div>
 <div class="t" style="left:375px;top:114px">ONT</div>
 <div class="t" style="left:375px;top:141px">Location</div>
 <div class="t" style="left:375px;top:168px">None</div>
 <div class="t" style="left:375px;top:195px">None</div>
 <!-- Table 3 -->
 <div class="a" style="left:369px;top:265px;width:685px;height:60px;border:1px solid #777"></div>
 <div class="a" style="left:370px;top:266px;width:683px;height:25px;background:#F0F0F0"></div>
 <div class="a" style="left:370px;top:292px;width:105px;height:30px;background:#D3D3D3"></div>
 <div class="a" style="left:369px;top:265px;width:685px;height:60px;border:1.5px solid #111;border-right:2px solid #111"></div>
 <div class="a" style="left:369px;top:290.5px;width:685px;height:1.5px;background:#111"></div>
 <div class="a" style="left:474px;top:291px;width:1.5px;height:30px;background:#111"></div>
 <div class="t" style="left:375px;top:270px;font-weight:700;font-size:17px;letter-spacing:0.45px">Additional Information</div>
 <div class="t" style="left:375px;top:297px">Comments</div>
 <div class="a" style="left:476px;top:293px;width:576px;height:20px;overflow:hidden"><div class="t" style="left:4px;top:4px">This OTDR trace has been generated by an OTDR module designed by EXFO</div></div>
 <!-- Table 4/5 -->
 <div class="a" style="left:1068px;top:55px;width:60px;height:111px;border:1px solid #777;border-right:none"></div>
 <div class="a" style="left:1069px;top:56px;width:59px;height:25px;background:#F0F0F0"></div>
 <div class="a" style="left:1069px;top:82px;width:59px;height:80px;background:#D3D3D3"></div>
 <div class="a" style="left:1068px;top:55px;width:60px;height:109px;border:1.5px solid #111;border-right:none;border-bottom:3px solid #111"></div>
 <div class="a" style="left:1068px;top:81px;width:60px;height:1.5px;background:#111"></div>
 <div class="a" style="left:1068px;top:108px;width:60px;height:1.5px;background:#111"></div>
 <div class="a" style="left:1068px;top:135px;width:60px;height:1.5px;background:#111"></div>
 <div class="a" style="left:1068px;top:180px;width:60px;height:111px;border:1px solid #777;border-right:none"></div>
 <div class="a" style="left:1069px;top:181px;width:59px;height:25px;background:#F0F0F0"></div>
 <div class="a" style="left:1069px;top:207px;width:59px;height:80px;background:#D3D3D3"></div>
 <div class="a" style="left:1068px;top:180px;width:60px;height:110px;border:1.5px solid #111;border-right:none;border-bottom:3px solid #111"></div>
 <div class="a" style="left:1068px;top:206px;width:60px;height:1.5px;background:#111"></div>
 <div class="a" style="left:1068px;top:233px;width:60px;height:1.5px;background:#111"></div>
 <div class="a" style="left:1068px;top:260px;width:60px;height:1.5px;background:#111"></div>
 <div class="t" style="left:1074px;top:60px;font-weight:700;font-size:17px;letter-spacing:0.5px">Location</div>
 <div class="t" style="left:1074px;top:87px">Unit model</div>
 <div class="t" style="left:1074px;top:114px">Unit serial</div>
 <div class="t" style="left:1074px;top:141px">Calibration</div>
 <div class="t" style="left:1074px;top:185px;font-weight:700;font-size:17px;letter-spacing:0.5px">Location</div>
 <div class="t" style="left:1074px;top:212px">Unit model</div>
 <div class="t" style="left:1074px;top:239px">Unit serial</div>
 <div class="t" style="left:1074px;top:266px">Calibration</div>
 </div>
</div>
<!-- vertical scrollbar -->
<div class="a" style="left:1129px;top:600px;width:25px;height:309px;background:#F0F0F0"></div>
<div class="a" style="left:1131px;top:627px;width:21px;height:239px;background:#CDCDCD"></div>
<svg class="a" style="left:1129px;top:600px" width="25" height="309" viewBox="0 0 25 309">
<path d="M7 18 l5 -5 l5 5" fill="none" stroke="#606060" stroke-width="3"/>
<path d="M7 292 l5 5 l5 -5" fill="none" stroke="#606060" stroke-width="3"/>
</svg>
<!-- horizontal scrollbar -->
<div class="a" style="left:18px;top:909px;width:1136px;height:22px;background:#F0F0F0"></div>
<div class="a" style="left:43px;top:909px;width:842px;height:22px;background:#CDCDCD"></div>
<svg class="a" style="left:18px;top:909px" width="1136" height="22" viewBox="0 0 1136 22">
<path d="M15 6 l-5 5 l5 5" fill="none" stroke="#606060" stroke-width="3"/>
<path d="M1096 6 l5 5 l-5 5" fill="none" stroke="#606060" stroke-width="3"/>
</svg>
<!-- bottom dock tab -->
<div class="a" style="left:9px;top:938px;width:1155px;height:6px;background:#98B8EA"></div>
<div class="a" style="left:9px;top:944px;width:1155px;height:41px;background:linear-gradient(#D8E7FC,#90B3E8);border-top:1px solid #1C2A8C"></div>
<div class="a" style="left:14px;top:944px;width:95px;height:31px;background:linear-gradient(#FF954A,#FFCC8E);border:2px solid #181C84;border-top:none"></div>
<svg class="a" style="left:19px;top:946px" width="28" height="26" viewBox="0 0 28 26">
<g stroke="#8890B0" stroke-width="0.8"><path d="M2 2 h9 l3 3 v17 h-12z" fill="#F4F6FA"/><path d="M4.5 3 h9 l3 3 v17 h-12z" fill="#F8FAFC"/><path d="M7 4.5 h10 l3.5 3.5 v16 h-13.5z" fill="#fff" stroke="#5860A0"/></g>
<g fill="#4A4A8A"><rect x="10" y="15" width="8" height="1.2"/><rect x="10" y="18" width="8" height="1.2"/><rect x="10" y="21" width="8" height="1.2"/></g>
<path d="M10 13 l3 -5 l2 3 l2 -2" stroke="#C04070" stroke-width="1" fill="none"/>
</svg>
<div class="t" style="left:50px;top:951px;font-size:16.5px;letter-spacing:-0.3px;color:#1A1A1A">Results</div>


<!-- FILES PANEL -->
<div class="hdr2" style="left:1174px;top:251px;width:743px;height:30px"></div>
<div class="t" style="left:1179px;top:257px;color:#fff;font-size:16.5px">Files</div>
<svg class="a" style="left:1860px;top:255px" width="56" height="22" viewBox="0 0 56 22">
<g fill="#fff"><rect x="12" y="3" width="6" height="7"/><rect x="10" y="10" width="10" height="2"/><rect x="14.2" y="12" width="1.6" height="6"/></g>
<rect x="13.5" y="4.5" width="3" height="5" fill="#5A86DA"/>
<path d="M38.5 6 l9 9 M47.5 6 l-9 9" stroke="#fff" stroke-width="2.2"/>
</svg>
<div class="a" style="left:1174px;top:281px;width:745px;height:667px;background:linear-gradient(90deg,#D8E6FA 0,#D8E6FA 739px,#C4D8F4 739px,#C4D8F4 744px,#E0ECFC 744px)"></div>
<div class="a" style="left:1164px;top:938px;width:755px;height:10px;background:#94B6E8"></div>
<div class="a" style="left:1164px;top:938px;width:10px;height:47px;background:linear-gradient(90deg,#98B8EA 0,#98B8EA 4px,#A6C2F0 4px,#A6C2F0 9px,#98B8EA 9px)"></div>
<div class="a" style="left:1178px;top:286px;width:735px;height:657px;background:#fff;border-top:2px solid #6E6E6E;border-left:2px solid #6E6E6E;border-right:1px solid #E0E0E0;border-bottom:3px solid #ECECEC"></div>
<!-- header -->
<div class="a" style="left:1180px;top:288px;width:732px;height:26px;background:#F0F0F0;border-bottom:1px solid #B4B4B4"></div>
<div class="a" style="left:1221px;top:288px;width:1px;height:25px;background:#C4C4C4"></div>
<div class="a" style="left:1688px;top:288px;width:1px;height:25px;background:#C4C4C4"></div>
<div class="a" style="left:1823px;top:288px;width:1px;height:25px;background:#C4C4C4"></div>
<div class="t" style="left:1185px;top:292px;font-size:16.5px;color:#1A1A1A">P/F</div>
<div class="t" style="left:1227px;top:292px;font-size:16.5px;color:#1A1A1A">File name</div>
<div class="t" style="left:1694px;top:292px;font-size:16.5px;color:#1A1A1A">Type</div>
<div class="t" style="left:1829px;top:292px;font-size:17px;color:#1A1A1A">Direction</div>
<!-- row 1 (clipped) -->
<div class="a" style="left:1180px;top:314px;width:732px;height:20px;overflow:hidden">
<div class="t" style="left:48px;top:6px;font-size:16.6px;color:#1A1A1A">1310 1550 30 km with launch and received.iolm</div>
<div class="t" style="left:514px;top:6px;font-size:16.5px;color:#1A1A1A">iOLM</div>
<div class="t" style="left:649px;top:6px;font-size:16.5px;color:#1A1A1A">A-&gt;B</div>
</div>
<svg class="a" style="left:1190px;top:316px" width="24" height="24" viewBox="0 0 24 24">
<defs><radialGradient id="rg" cx="0.4" cy="0.3" r="0.7"><stop offset="0" stop-color="#FF8A8A"/><stop offset="0.6" stop-color="#E02020"/><stop offset="1" stop-color="#A01010"/></radialGradient>
<radialGradient id="gg" cx="0.4" cy="0.3" r="0.7"><stop offset="0" stop-color="#A8E070"/><stop offset="0.6" stop-color="#3CA020"/><stop offset="1" stop-color="#1E7010"/></radialGradient></defs>
<circle cx="11.4" cy="11.6" r="10.5" fill="url(#rg)"/>
<path d="M7.6 7.8 l7.6 7.6 M15.2 7.8 l-7.6 7.6" stroke="#fff" stroke-width="2.6"/>
</svg>
<!-- red box region -->
<div class="a" style="left:1174px;top:336px;width:737px;height:71px;background:#fff"></div>
<div class="a" style="left:1174px;top:336px;width:737px;height:7px;background:linear-gradient(#C4C4C4,#E4E4E4)"></div>
<div class="a" style="left:1174px;top:336px;width:6px;height:70px;background:linear-gradient(90deg,#D8E6FA,#C0C8D4 40%,#707070 70%,#8A8A8A)"></div>
<div class="a" style="left:1180px;top:342px;width:731px;height:54px;background:#0078D7"></div>
<svg class="a" style="left:1190px;top:344px" width="24" height="50" viewBox="0 0 24 50">
<circle cx="11.4" cy="11.5" r="10.5" fill="url(#gg)"/>
<path d="M6.5 11.5 l3.5 4 l7 -8.5" stroke="#fff" stroke-width="2.4" fill="none"/>
<circle cx="11.4" cy="38.7" r="10.5" fill="url(#gg)"/>
<path d="M6.5 38.7 l3.5 4 l7 -8.5" stroke="#fff" stroke-width="2.4" fill="none"/>
</svg>
<div class="t" style="left:1228px;top:348.5px;font-size:16.6px;color:#fff">1310 1550 30 km with launch and received_1310.sor</div>
<div class="t" style="left:1228px;top:375.5px;font-size:16.6px;color:#fff">1310 1550 30 km with launch and received_1550.sor</div>
<div class="t" style="left:1694px;top:348.5px;font-size:16.3px;letter-spacing:-0.8px;color:#fff">OTDR</div>
<div class="t" style="left:1694px;top:375.5px;font-size:16.3px;letter-spacing:-0.8px;color:#fff">OTDR</div>
<div class="t" style="left:1829px;top:348.5px;font-size:16.8px;color:#fff">A-&gt;B</div>
<div class="t" style="left:1829px;top:375.5px;font-size:16.8px;color:#fff">A-&gt;B</div>
<div class="a" style="left:1172px;top:334px;width:735px;height:74px;border:2px solid #C0141C"></div>
<div class="a" style="left:1176px;top:408px;width:737px;height:7px;background:linear-gradient(#C8C8C8,#F8F8F8)"></div>
<!-- scrollbar -->
<div class="a" style="left:1180px;top:917px;width:731px;height:22px;background:#F0F0F0"></div>
<div class="a" style="left:1206px;top:917px;width:420px;height:22px;background:#CDCDCD"></div>
<svg class="a" style="left:1180px;top:917px" width="731" height="22" viewBox="0 0 731 22">
<path d="M16 6 l-5 5 l5 5" fill="none" stroke="#606060" stroke-width="3"/>
<path d="M715 6 l5 5 l-5 5" fill="none" stroke="#606060" stroke-width="3"/>
</svg>
<!-- bottom tabs -->
<div class="a" style="left:1174px;top:948px;width:746px;height:37px;background:linear-gradient(#D8E7FC,#90B3E8);border-top:1px solid #1C2A8C"></div>
<div class="a" style="left:1179px;top:948px;width:76px;height:31px;background:linear-gradient(#FF954A,#FFCC8E);border:2px solid #181C84;border-top:none"></div>
<svg class="a" style="left:1184px;top:951px" width="480" height="26" viewBox="0 0 480 26">
<g stroke="#8890B0" stroke-width="0.8">
<path d="M2 2 h9 l3 3 v17 h-12z" fill="#F4F6FA"/><path d="M5 4 h9 l3 3 v16 h-12z" fill="#F8FAFC"/><path d="M7.5 5 h10 l3.5 3.5 v16 h-13.5z" fill="#fff" stroke="#6870A0"/>
</g>
<rect x="78" y="8" width="23" height="9" fill="#F8F8F8" stroke="#5A6070"/>
<g stroke="#5A6070" stroke-width="1"><path d="M81 8 v3 M84 8 v5 M87 8 v3 M90 8 v5 M93 8 v3 M96 8 v5"/></g>
<g fill="#202020"><rect x="227" y="0" width="3" height="3"/><rect x="231" y="2" width="17" height="1.6" fill="#303030"/>
<rect x="230" y="7" width="2" height="2" fill="#505050"/><rect x="235" y="8" width="13" height="1.3" fill="#707070"/>
<rect x="230" y="13" width="2" height="2" fill="#505050"/><rect x="235" y="14" width="13" height="1.3" fill="#707070"/>
<rect x="230" y="19" width="2" height="2" fill="#505050"/><rect x="235" y="20" width="13" height="1.3" fill="#707070"/></g>
<rect x="219" y="1" width="1" height="23" fill="#8098C8"/><rect x="334" y="1" width="1" height="23" fill="#8098C8"/><rect x="476" y="1" width="1" height="23" fill="#8098C8"/>
<path d="M342 3 h10 v14 h-10z" fill="#fff" stroke="#9A9AB0" stroke-width="0.8"/>
<path d="M347 8 h11 v15 h-11z" fill="#fff" stroke="#7A7A9A" stroke-width="0.8"/>
<path d="M344 4 l5 5 M349 4 l-5 5" stroke="#E02020" stroke-width="1.5"/><rect x="349" y="12" width="7" height="1" fill="#C04040"/><rect x="349" y="15" width="7" height="1" fill="#8080A0"/><rect x="349" y="18" width="7" height="1" fill="#8080A0"/>
</svg>
<div class="t" style="left:1215px;top:955px;font-size:16.5px;color:#1A1A1A">Files</div>
<div class="t" style="left:1290px;top:955px;font-size:16.5px;color:#1A1A1A">Measurements</div>
<div class="t" style="left:1438px;top:955px;font-size:16.5px;color:#1A1A1A">Identifiers</div>
<div class="t" style="left:1554px;top:955px;font-size:16.5px;color:#1A1A1A">Matched Files</div>


<!-- STATUS BAR -->
<div class="a" style="left:0;top:985px;width:1920px;height:34px;background:#F6F6F6"></div>
<div class="a" style="left:1px;top:985px;width:1918px;height:3px;background:#FFFFFF"></div>
<div class="a" style="left:1px;top:988px;width:1918px;height:1px;background:#E2E2E2"></div>
<div class="a" style="left:3px;top:990px;width:1895px;height:29px;background:#FDFDFD"></div>
<div class="t" style="left:1586px;top:998px;font-size:17px;letter-spacing:0.2px;color:#111">| Selected files: 2/3, measurements: 2/3</div>
<div class="a" style="left:0;top:0;width:1px;height:91px;background:#0062B4"></div>
<div class="a" style="left:1919px;top:0;width:1px;height:91px;background:#0062B4"></div>
<div class="a" style="left:0;top:91px;width:1px;height:928px;background:#C8C8C8"></div>
<div class="a" style="left:1919px;top:91px;width:1px;height:928px;background:#C8C8C8"></div>
</body></html>
